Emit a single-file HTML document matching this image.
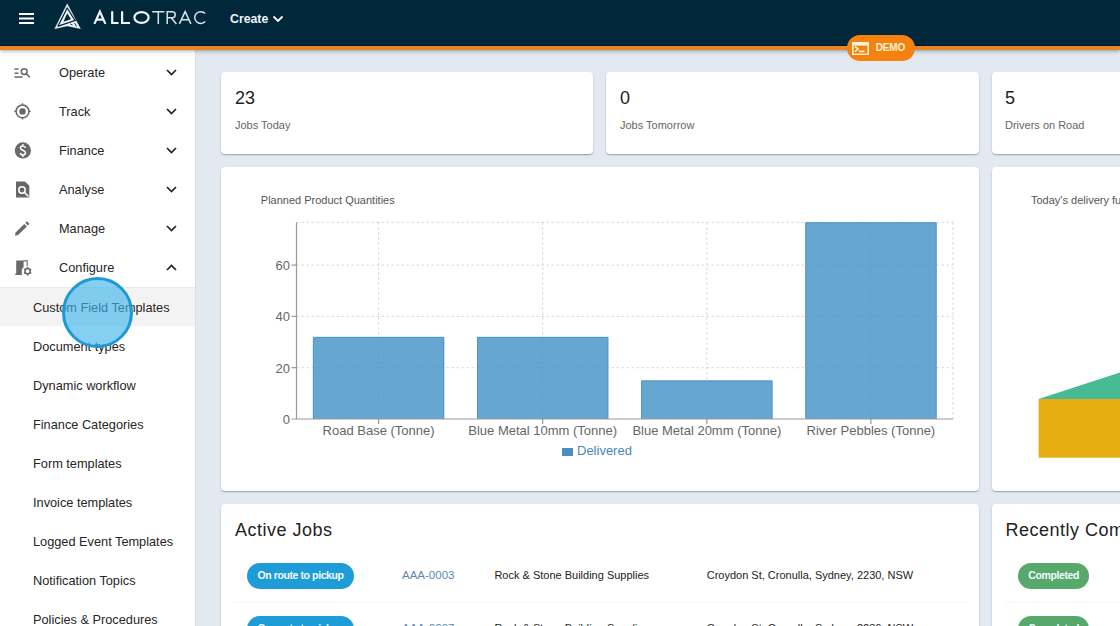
<!DOCTYPE html>
<html><head><meta charset="utf-8">
<style>
*{box-sizing:border-box;margin:0;padding:0}
html,body{width:1120px;height:626px;overflow:hidden;background:#e2e9f1;font-family:"Liberation Sans",sans-serif;color:#222}
.a{position:absolute;white-space:nowrap;line-height:1}
#hdr{position:absolute;left:0;top:0;width:1120px;height:50px;background:#01273a;border-bottom:4px solid #e8842a;box-shadow:0 1px 4px rgba(0,0,0,.35);z-index:5}
#side{position:absolute;left:0;top:50px;width:196px;height:576px;background:#fff;border-right:1px solid #d9dee4;z-index:2}
.card{position:absolute;background:#fff;border-radius:4px;box-shadow:0 1px 1.5px rgba(0,0,0,.32)}
.nav{font-size:12.75px;color:#262626}
.sub{font-size:12.75px;color:#262626}
.big{font-size:18px;color:#222}
.lbl{font-size:11px;color:#666}
.pill{height:26px;border-radius:13px;color:#f4fbff;font-size:10.5px;letter-spacing:-0.4px;font-weight:bold;text-align:center;line-height:24px}
.jid{font-size:11.5px;color:#5a87b3}
.jt{font-size:11px;color:#222}
</style></head><body>

<div id="hdr">
  <div class="a" style="left:0;top:45px;width:1120px;height:1px;background:#011823"></div>
  <svg class="a" style="left:0;top:0" width="300" height="46" viewBox="0 0 300 46">
    <g fill="#fff">
      <rect x="19" y="13" width="15" height="2"/>
      <rect x="19" y="17.5" width="15" height="2"/>
      <rect x="19" y="22" width="15" height="2"/>
    </g>
    <path d="M67.2 3.7 L80.5 28.7 L67.3 25.9 L54.7 28.8 Z" fill="#eef6fa" stroke="#eef6fa" stroke-width="0.3"/>
    <g fill="none" stroke="#01273a" stroke-width="1.25">
      <path d="M57.9 26.3 L67.2 8.0 L75.4 21.0 M57.5 26.4 L76.2 20.2"/>
      <path d="M70.4 24.0 L72.5 25.0 M74.6 23.0 L76.5 26.6" stroke-width="0.95"/>
    </g>
    <path d="M67.2 13.3 L71.0 19.3 L63.4 21.7 Z" fill="#01273a"/>
    <g fill="none" stroke="#f2f8fb" stroke-linecap="butt">
      <path d="M94.4 23.9 L99.9 11.6 L105.4 23.9 M96.6 19.7 H103.2 M112.2 11.2 V23 H118.5 M122.1 11.2 V23 H130" stroke-width="2.2"/>
      <ellipse cx="141.5" cy="17.55" rx="7.1" ry="5.4" stroke-width="2.2"/>
      <path d="M152.2 11.8 H164.4 M158.3 11.8 V23.9 M167.2 23.9 V11.8 H172.2 A3 3 0 0 1 172.2 17.8 H167.2 M171.2 17.8 L176.4 23.9 M179.4 23.9 L185.15 11.6 L190.9 23.9 M181.4 19.7 H188.9 M205.2 13.6 A6 5.9 0 1 0 205.2 21.5" stroke-width="1.5" stroke="#d6e4ec"/>
    </g>
  </svg>
    <div class="a" style="left:230px;top:13.4px;font-size:12.3px;font-weight:bold;color:#eef4f8">Create</div>
  <svg class="a" style="left:272px;top:15px" width="12" height="8" viewBox="0 0 12 8"><path d="M1.5 1.5 L6 6 L10.5 1.5" fill="none" stroke="#fff" stroke-width="1.8"/></svg>
</div>

<!-- DEMO badge -->
<div class="a" style="left:847px;top:35px;width:68px;height:25.5px;border-radius:13px;background:#f5820f;z-index:6">
  <svg class="a" style="left:5px;top:6.5px" width="17" height="13" viewBox="0 0 17 13">
    <rect x="0.8" y="0.8" width="15.4" height="11.6" fill="none" stroke="#fff3d6" stroke-width="1.6"/>
    <rect x="0.8" y="0.8" width="15.4" height="2.8" fill="#fff3d6"/>
    <path d="M3 4.6 L6.1 7.1 L3 9.6" fill="none" stroke="#fff3d6" stroke-width="1.5"/>
    <rect x="7" y="8.6" width="5.5" height="1.6" fill="#fff3d6"/>
  </svg>
  <div class="a" style="left:28.8px;top:8.4px;font-size:10px;letter-spacing:-0.2px;font-weight:bold;color:#fff3d6">DEMO</div>
</div>

<div id="side">
</div>

<!-- sidebar content (page coordinates) -->
<div style="position:absolute;left:0;top:0;z-index:3">
  <div class="a" style="left:0;top:287px;width:195px;height:39px;background:#f3f3f3;border-top:1px solid #e9e9e9"></div>
  <div class="a nav" style="left:59px;top:67.0px">Operate</div>
  <div class="a nav" style="left:59px;top:106.0px">Track</div>
  <div class="a nav" style="left:59px;top:145.0px">Finance</div>
  <div class="a nav" style="left:59px;top:184.0px">Analyse</div>
  <div class="a nav" style="left:59px;top:223.0px">Manage</div>
  <div class="a nav" style="left:59px;top:262.0px">Configure</div>
  <div class="a sub" style="left:33px;top:302.0px">Custom Field Templates</div>
  <div class="a sub" style="left:33px;top:341.0px">Document types</div>
  <div class="a sub" style="left:33px;top:380.0px">Dynamic workflow</div>
  <div class="a sub" style="left:33px;top:419.0px">Finance Categories</div>
  <div class="a sub" style="left:33px;top:458.0px">Form templates</div>
  <div class="a sub" style="left:33px;top:497.0px">Invoice templates</div>
  <div class="a sub" style="left:33px;top:536.0px">Logged Event Templates</div>
  <div class="a sub" style="left:33px;top:575.0px">Notification Topics</div>
  <div class="a sub" style="left:33px;top:614.0px">Policies &amp; Procedures</div>
  <svg class="a" style="left:0;top:0" width="195" height="300" viewBox="0 0 195 300">
    <g fill="none" stroke="#222" stroke-width="1.7">
      <path d="M167 70 L171.5 74.5 L176 70"/>
      <path d="M167 109 L171.5 113.5 L176 109"/>
      <path d="M167 148 L171.5 152.5 L176 148"/>
      <path d="M167 187 L171.5 191.5 L176 187"/>
      <path d="M167 226 L171.5 230.5 L176 226"/>
      <path d="M167 270 L171.5 265.5 L176 270"/>
    </g>
    <g fill="#666" stroke="none">
      <!-- operate -->
      <rect x="14.5" y="68.3" width="4" height="1.5"/>
      <rect x="14.5" y="72.5" width="4" height="1.5"/>
      <rect x="14.5" y="76.3" width="8" height="1.5"/>
    </g>
    <g fill="none" stroke="#666">
      <circle cx="24.2" cy="71.6" r="2.9" stroke-width="1.5"/>
      <path d="M26.3 73.8 L29.8 77.3" stroke-width="1.6"/>
      <!-- track -->
      <circle cx="22.5" cy="111.4" r="6.4" stroke-width="1.5"/>
      <path d="M22.5 103.2 V105.2 M22.5 117.6 V119.6 M14.3 111.4 H16.3 M28.7 111.4 H30.7" stroke-width="1.4"/>
    </g>
    <circle cx="22.5" cy="111.4" r="3.2" fill="#666"/>
    <!-- finance -->
    <circle cx="22.9" cy="150.4" r="8.1" fill="#696969"/>
    <path d="M25.4 147.9 C25.1 146.6 24.1 145.9 22.9 145.9 C21.4 145.9 20.4 146.8 20.4 148 C20.4 150.6 25.5 150 25.5 152.8 C25.5 154.1 24.4 155 22.9 155 C21.5 155 20.5 154.3 20.2 153 M22.9 143.9 V145.9 M22.9 155 V157" fill="none" stroke="#fff" stroke-width="1.5"/>
    <!-- analyse -->
    <path d="M16 181.4 H25 L29.3 185.7 V197.6 H16 Z" fill="#666"/>
    <circle cx="22" cy="190" r="3.2" fill="none" stroke="#fff" stroke-width="1.5"/>
    <path d="M24.3 192.3 L28.5 196.5" stroke="#fff" stroke-width="1.6"/>
    <!-- manage pencil -->
    <path d="M15 235.8 L15.6 232.6 L24.3 223.9 L26.8 226.4 L18.1 235.1 Z" fill="#696969"/>
    <path d="M25.3 222.9 L26.9 221.3 L29.4 223.8 L27.8 225.4 Z" fill="#696969"/>
    <!-- configure -->
    <path d="M16.2 260.4 H23.6 V267.2 C22 268.2 21.6 270 21.8 272 V274.4 H16.2 Z" fill="#696969"/>
    <path d="M15.2 274.4 H21.8 M23.2 260.9 H27.2 V266.2" fill="none" stroke="#696969" stroke-width="1.1"/>
    <g transform="translate(27.6,271.2)">
      <circle r="2.6" fill="none" stroke="#696969" stroke-width="1.5"/>
      <g stroke="#696969" stroke-width="1.5">
        <path d="M0 -4.2 V-2.6 M0 2.6 V4.2 M-3.64 -2.1 L-2.25 -1.3 M2.25 1.3 L3.64 2.1 M-3.64 2.1 L-2.25 1.3 M2.25 -1.3 L3.64 -2.1"/>
      </g>
    </g>
  </svg>
  <!-- touch highlight circle -->
  <div class="a" style="left:61.5px;top:277px;width:71px;height:71px;border-radius:50%;background:rgba(62,180,234,.63);border:3px solid #1d9ad5"></div>
</div>

<!-- stat cards -->
<div class="card" style="left:221px;top:72px;width:372px;height:82px"></div>
<div class="card" style="left:606px;top:72px;width:373px;height:82px"></div>
<div class="card" style="left:992px;top:72px;width:373px;height:82px"></div>
<div class="a big" style="left:235px;top:88.8px">23</div>
<div class="a lbl" style="left:235px;top:120.1px">Jobs Today</div>
<div class="a big" style="left:620px;top:88.8px">0</div>
<div class="a lbl" style="left:620px;top:120.1px">Jobs Tomorrow</div>
<div class="a big" style="left:1005px;top:88.8px">5</div>
<div class="a lbl" style="left:1005px;top:120.1px">Drivers on Road</div>

<!-- chart cards -->
<div class="card" style="left:221px;top:167px;width:758px;height:324px"></div>
<div class="card" style="left:992px;top:167px;width:373px;height:324px"></div>

<!-- active jobs -->
<div class="card" style="left:221px;top:504px;width:758px;height:300px"></div>
<div class="card" style="left:992px;top:504px;width:373px;height:300px"></div>

<svg class="a" style="left:0;top:0;z-index:1" width="1120" height="626" viewBox="0 0 1120 626">
<path d="M296.5 367.7 H953.0 M296.5 316.4 H953.0 M296.5 265.1 H953.0 M296.5 222.3 H953.0 M378.6 222.3 V419.0 M542.7 222.3 V419.0 M706.8 222.3 V419.0 M870.9 222.3 V419.0 M953.0 222.3 V419.0" stroke="#000" stroke-opacity="0.16" stroke-width="1" stroke-dasharray="2.5 2.5" fill="none"/>
<text x="260.8" y="204.4" font-family="Liberation Sans" font-size="11" fill="#555">Planned Product Quantities</text>
<rect x="312.9" y="336.9" width="131.3" height="82.1" fill="rgb(64,145,198)" fill-opacity="0.8"/><path d="M313.4 419 V337.4 H443.7 V419" fill="none" stroke="#5597c4" stroke-width="1"/>
<rect x="477.0" y="336.9" width="131.3" height="82.1" fill="rgb(64,145,198)" fill-opacity="0.8"/><path d="M477.5 419 V337.4 H607.8 V419" fill="none" stroke="#5597c4" stroke-width="1"/>
<rect x="641.2" y="380.5" width="131.3" height="38.5" fill="rgb(64,145,198)" fill-opacity="0.8"/><path d="M641.7 419 V381.0 H772.0 V419" fill="none" stroke="#5597c4" stroke-width="1"/>
<rect x="805.3" y="222.3" width="131.3" height="196.7" fill="rgb(64,145,198)" fill-opacity="0.8"/><path d="M805.8 419 V222.8 H936.1 V419" fill="none" stroke="#5597c4" stroke-width="1"/>

<path d="M296.5 222.3 V419.5 M291.5 419.0 H953.0 M291.5 419.0 H296.5 M291.5 367.7 H296.5 M291.5 316.4 H296.5 M291.5 265.1 H296.5 M378.6 419.0 V424.0 M542.7 419.0 V424.0 M706.8 419.0 V424.0 M870.9 419.0 V424.0" stroke="#9a9a9a" stroke-width="1.2" fill="none"/>
<text x="290" y="423.9" font-family="Liberation Sans" font-size="13" fill="#666" text-anchor="end">0</text>
<text x="290" y="372.6" font-family="Liberation Sans" font-size="13" fill="#666" text-anchor="end">20</text>
<text x="290" y="321.3" font-family="Liberation Sans" font-size="13" fill="#666" text-anchor="end">40</text>
<text x="290" y="270.0" font-family="Liberation Sans" font-size="13" fill="#666" text-anchor="end">60</text>
<text x="378.6" y="434.6" font-family="Liberation Sans" font-size="13" fill="#666" text-anchor="middle">Road Base (Tonne)</text>
<text x="542.7" y="434.6" font-family="Liberation Sans" font-size="13" fill="#666" text-anchor="middle">Blue Metal 10mm (Tonne)</text>
<text x="706.8" y="434.6" font-family="Liberation Sans" font-size="13" fill="#666" text-anchor="middle">Blue Metal 20mm (Tonne)</text>
<text x="870.9" y="434.6" font-family="Liberation Sans" font-size="13" fill="#666" text-anchor="middle">River Pebbles (Tonne)</text>
<rect x="562" y="448" width="11" height="8" fill="#4a8fc4"/>
<text x="577" y="455" font-family="Liberation Sans" font-size="13" fill="#4a87b8">Delivered</text>
<text x="1031" y="204.4" font-family="Liberation Sans" font-size="11" fill="#555">Today's delivery fulfilment</text>
<rect x="1038.6" y="399" width="100" height="58.7" fill="#e5ae12"/>
<path d="M1038.6 399 L1120 372.6 L1120 399 Z" fill="#46b995"/>
</svg>
<!-- active jobs content -->
<div class="a" style="left:235px;top:520.7px;font-size:18px;letter-spacing:0.5px;color:#222">Active Jobs</div>
<div class="a" style="left:1005.5px;top:520.7px;font-size:18px;letter-spacing:0.5px;color:#222">Recently Completed</div>
<div class="a" style="left:234px;top:602px;width:732px;height:1px;background:#f5f5f5"></div>
<div class="a" style="left:1005px;top:602px;width:200px;height:1px;background:#f5f5f5"></div>

<div class="a pill" style="left:247px;top:563px;width:107px;background:#1e9cd8">On route to pickup</div>
<div class="a jid" style="left:402px;top:570.4px">AAA-0003</div>
<div class="a jt" style="left:494.4px;top:570.4px">Rock &amp; Stone Building Supplies</div>
<div class="a jt" style="left:706.7px;top:570.4px">Croydon St, Cronulla, Sydney, 2230, NSW</div>

<div class="a pill" style="left:247px;top:616px;width:107px;background:#1e9cd8">On route to pickup</div>
<div class="a jid" style="left:402px;top:623.4px">AAA-0007</div>
<div class="a jt" style="left:494.4px;top:623.4px">Rock &amp; Stone Building Supplies</div>
<div class="a jt" style="left:706.7px;top:623.4px">Croydon St, Cronulla, Sydney, 2230, NSW</div>

<div class="a pill" style="left:1018.4px;top:563px;width:70.6px;background:#56a86b">Completed</div>
<div class="a pill" style="left:1018.4px;top:616px;width:70.6px;background:#56a86b">Completed</div>


</body></html>
